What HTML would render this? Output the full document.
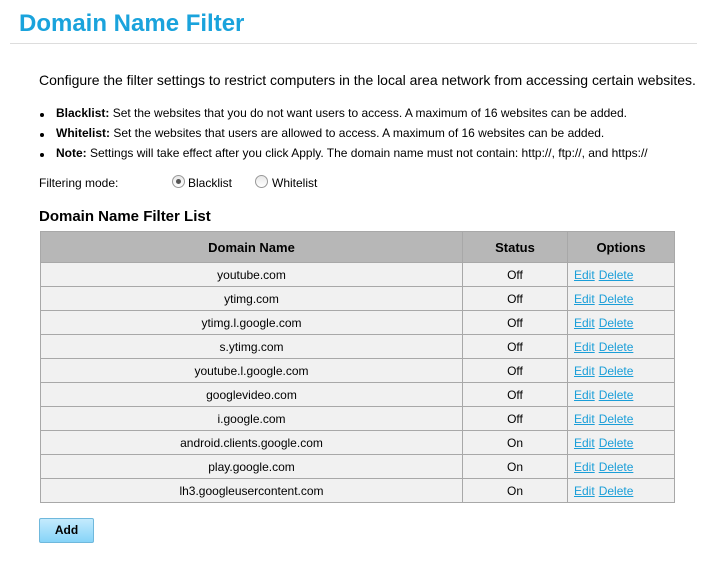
<!DOCTYPE html>
<html><head><meta charset="utf-8"><style>
body{margin:0;width:712px;height:569px;background:#fff;font-family:"Liberation Sans",Arial,sans-serif;color:#000;position:relative;overflow:hidden}
.a{position:absolute;white-space:nowrap}
h1{position:absolute;left:19px;top:10px;margin:0;font-size:24px;font-weight:bold;color:#1aa3dc}
.hr{position:absolute;left:10px;top:43px;width:687px;height:1px;background:#ddd}
.s{font-size:12px}
.dot{position:absolute;width:4px;height:4px;border-radius:50%;background:#000}
.radio{position:absolute;width:11px;height:11px;border:1px solid #999;border-radius:50%;background:linear-gradient(#e8e8e8,#fff)}
table{position:absolute;left:40px;top:231px;border-collapse:collapse;font-size:12px}
td,th{border:1px solid #a8a8a8;text-align:center;padding:0;height:23px}
th{background:#b7b7b7;height:30px;font-size:13px;font-weight:bold}
td{background:#f1f1f1}
td.o{text-align:left;padding-left:4px}
a{color:#1a9ed8;text-decoration:underline;margin:0 2px}
.btn{position:absolute;left:39px;top:518px;width:53px;height:23px;border:1px solid #6fb8dc;border-radius:2px;background:linear-gradient(#c4ebfd,#86d4f8);font-size:12px;font-weight:bold;text-align:center;line-height:23px}
</style></head><body>
<h1>Domain Name Filter</h1>
<div class="hr"></div>
<div class="a" style="left:39px;top:72px;font-size:14px;letter-spacing:-0.02px">Configure the filter settings to restrict computers in the local area network from accessing certain websites.</div>
<div class="dot" style="left:40px;top:113px"></div>
<div class="a s" style="left:56px;top:106px"><b>Blacklist:</b> Set the websites that you do not want users to access. A maximum of 16 websites can be added.</div>
<div class="dot" style="left:40px;top:133px"></div>
<div class="a s" style="left:56px;top:126px"><b>Whitelist:</b> Set the websites that users are allowed to access. A maximum of 16 websites can be added.</div>
<div class="dot" style="left:40px;top:153px"></div>
<div class="a s" style="left:56px;top:146px"><b>Note:</b> Settings will take effect after you click Apply. The domain name must not contain: http://, ftp://, and https://</div>
<div class="a s" style="left:39px;top:176px">Filtering mode:</div>
<div class="radio" style="left:172px;top:175px"><div style="position:absolute;left:3px;top:3px;width:5px;height:5px;border-radius:50%;background:#555"></div></div>
<div class="a s" style="left:188px;top:176px">Blacklist</div>
<div class="radio" style="left:255px;top:175px"></div>
<div class="a s" style="left:272px;top:176px">Whitelist</div>
<div class="a" style="left:39px;top:208px;font-size:15px;font-weight:bold">Domain Name Filter List</div>
<table>
<tr><th style="width:421px">Domain Name</th><th style="width:104px">Status</th><th style="width:106px">Options</th></tr>
<tr><td>youtube.com</td><td>Off</td><td class="o"><a>Edit</a><a>Delete</a></td></tr>
<tr><td>ytimg.com</td><td>Off</td><td class="o"><a>Edit</a><a>Delete</a></td></tr>
<tr><td>ytimg.l.google.com</td><td>Off</td><td class="o"><a>Edit</a><a>Delete</a></td></tr>
<tr><td>s.ytimg.com</td><td>Off</td><td class="o"><a>Edit</a><a>Delete</a></td></tr>
<tr><td>youtube.l.google.com</td><td>Off</td><td class="o"><a>Edit</a><a>Delete</a></td></tr>
<tr><td>googlevideo.com</td><td>Off</td><td class="o"><a>Edit</a><a>Delete</a></td></tr>
<tr><td>i.google.com</td><td>Off</td><td class="o"><a>Edit</a><a>Delete</a></td></tr>
<tr><td>android.clients.google.com</td><td>On</td><td class="o"><a>Edit</a><a>Delete</a></td></tr>
<tr><td>play.google.com</td><td>On</td><td class="o"><a>Edit</a><a>Delete</a></td></tr>
<tr><td>lh3.googleusercontent.com</td><td>On</td><td class="o"><a>Edit</a><a>Delete</a></td></tr>
</table>
<div class="btn">Add</div>
</body></html>
